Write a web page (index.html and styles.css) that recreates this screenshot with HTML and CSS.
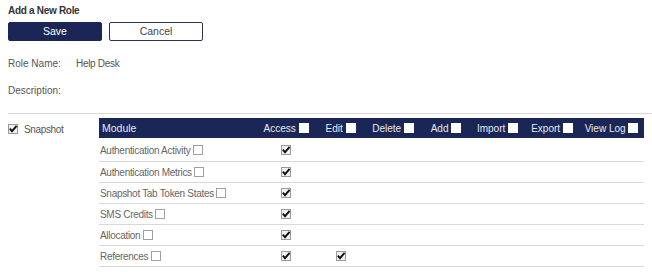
FILE: index.html
```html
<!DOCTYPE html>
<html>
<head>
<meta charset="utf-8">
<link rel="stylesheet" href="styles.css">
</head>
<body>
<h1 class="title">Add a New Role</h1>
<div class="actions">
  <button class="btn btn-primary">Save</button>
  <button class="btn btn-secondary">Cancel</button>
</div>
<div class="info">
  <div class="info-row"><span class="info-label">Role Name:</span><span class="info-value">Help Desk</span></div>
  <div class="info-row"><span class="info-label">Description:</span><span class="info-value"></span></div>
</div>
<hr class="divider">
<div class="section">
  <div class="section-side">
    <span class="cb cb-checked"><svg viewBox="0 0 10 10" width="10" height="10"><path d="M1.8 4.6 L4 7.2 L8.6 1.8" fill="none" stroke="#111" stroke-width="1.9"/></svg></span>
    <span class="section-name">Snapshot</span>
  </div>
  <table class="perm">
    <colgroup>
      <col class="c-module"><col class="c-access"><col class="c-edit"><col class="c-delete"><col class="c-add"><col class="c-import"><col class="c-export"><col class="c-log">
    </colgroup>
    <thead>
      <tr>
        <th class="th-module">Module</th>
        <th>Access <span class="cb cb-head"></span></th>
        <th>Edit <span class="cb cb-head"></span></th>
        <th>Delete <span class="cb cb-head"></span></th>
        <th>Add <span class="cb cb-head"></span></th>
        <th>Import <span class="cb cb-head"></span></th>
        <th>Export <span class="cb cb-head"></span></th>
        <th>View Log <span class="cb cb-head"></span></th>
      </tr>
    </thead>
    <tbody>
      <tr>
        <td class="td-module">Authentication Activity <span class="cb"></span></td>
        <td><span class="cb cb-checked"><svg viewBox="0 0 10 10" width="10" height="10"><path d="M1.8 4.6 L4 7.2 L8.6 1.8" fill="none" stroke="#111" stroke-width="1.9"/></svg></span></td>
        <td></td><td></td><td></td><td></td><td></td><td></td>
      </tr>
      <tr>
        <td class="td-module">Authentication Metrics <span class="cb"></span></td>
        <td><span class="cb cb-checked"><svg viewBox="0 0 10 10" width="10" height="10"><path d="M1.8 4.6 L4 7.2 L8.6 1.8" fill="none" stroke="#111" stroke-width="1.9"/></svg></span></td>
        <td></td><td></td><td></td><td></td><td></td><td></td>
      </tr>
      <tr>
        <td class="td-module">Snapshot Tab Token States <span class="cb"></span></td>
        <td><span class="cb cb-checked"><svg viewBox="0 0 10 10" width="10" height="10"><path d="M1.8 4.6 L4 7.2 L8.6 1.8" fill="none" stroke="#111" stroke-width="1.9"/></svg></span></td>
        <td></td><td></td><td></td><td></td><td></td><td></td>
      </tr>
      <tr>
        <td class="td-module">SMS Credits <span class="cb"></span></td>
        <td><span class="cb cb-checked"><svg viewBox="0 0 10 10" width="10" height="10"><path d="M1.8 4.6 L4 7.2 L8.6 1.8" fill="none" stroke="#111" stroke-width="1.9"/></svg></span></td>
        <td></td><td></td><td></td><td></td><td></td><td></td>
      </tr>
      <tr>
        <td class="td-module">Allocation <span class="cb"></span></td>
        <td><span class="cb cb-checked"><svg viewBox="0 0 10 10" width="10" height="10"><path d="M1.8 4.6 L4 7.2 L8.6 1.8" fill="none" stroke="#111" stroke-width="1.9"/></svg></span></td>
        <td></td><td></td><td></td><td></td><td></td><td></td>
      </tr>
      <tr>
        <td class="td-module">References <span class="cb"></span></td>
        <td><span class="cb cb-checked"><svg viewBox="0 0 10 10" width="10" height="10"><path d="M1.8 4.6 L4 7.2 L8.6 1.8" fill="none" stroke="#111" stroke-width="1.9"/></svg></span></td>
        <td><span class="cb cb-checked"><svg viewBox="0 0 10 10" width="10" height="10"><path d="M1.8 4.6 L4 7.2 L8.6 1.8" fill="none" stroke="#111" stroke-width="1.9"/></svg></span></td>
        <td></td><td></td><td></td><td></td><td></td>
      </tr>
    </tbody>
  </table>
</div>
</body>
</html>
```
FILE: styles.css
```css
html, body {
  margin: 0;
  padding: 0;
  background: #fff;
}
body {
  padding: 0 8px;
  font-family: "Liberation Sans", Arial, sans-serif;
  font-size: 10px;
  color: #555;
  overflow: hidden;
}
.title {
  margin: 0;
  padding-top: 4px;
  font-size: 10px;
  font-weight: bold;
  letter-spacing: -0.3px;
  color: #333;
  line-height: 13px;
}
.actions {
  display: flex;
  gap: 7px;
  margin-top: 5px;
}
.btn {
  width: 94px;
  height: 19px;
  font-family: "Liberation Sans", Arial, sans-serif;
  font-size: 10.5px;
  border-radius: 2px;
  padding: 0;
  line-height: 17px;
}
.btn-primary {
  background: #1a2756;
  border: 1px solid #1a2756;
  color: #fff;
}
.btn-secondary {
  background: #fff;
  border: 1px solid #2d3550;
  color: #444;
}
.info {
  display: flex;
  flex-direction: column;
  gap: 14px;
  margin-top: 16px;
}
.info-row {
  display: flex;
  height: 13px;
  line-height: 13px;
}
.info-label {
  width: 68px;
  color: #555;
}
.info-value {
  color: #555;
  letter-spacing: -0.3px;
}
.divider {
  border: 0;
  border-top: 1px solid #d9d9d9;
  margin: 16px -8px 0 0;
  height: 0;
}
.section {
  display: flex;
  margin-top: 4px;
}
.section-side {
  width: 92px;
  display: flex;
  align-items: center;
  align-self: flex-start;
  height: 22px;
  gap: 6px;
}
.section-name {
  color: #555;
  letter-spacing: -0.35px;
}
.cb {
  display: inline-block;
  width: 10px;
  height: 10px;
  box-sizing: border-box;
  border: 1px solid #a0a0a0;
  background: #fff;
  vertical-align: -1px;
  position: relative;
  letter-spacing: 0;
}
.cb svg {
  position: absolute;
  left: -1px;
  top: -1px;
}
.cb-checked {
  border-color: #9a9a9a;
  background: #f2f2f2;
}
.cb-head {
  border-color: #fff;
  background: #fff;
}
.perm {
  border-collapse: collapse;
  table-layout: fixed;
  width: 545px;
}
.c-module { width: 156px; }
.c-access { width: 62px; }
.c-edit { width: 47px; }
.c-delete { width: 58px; }
.c-add { width: 48px; }
.c-import { width: 55px; }
.c-export { width: 54px; }
.c-log { width: 65px; }
.perm thead th {
  background: #1a2756;
  color: #e8e8f0;
  font-weight: normal;
  height: 20px;
  padding: 0;
  text-align: center;
  white-space: nowrap;
  font-size: 10px;
}
.perm thead th.th-module {
  text-align: left;
  padding-left: 3px;
  font-size: 10.5px;
}
.perm tbody td {
  height: 20px;
  padding: 0;
  text-align: center;
  border-bottom: 1px solid #d9d9d9;
  white-space: nowrap;
}
.perm tbody tr:first-child td {
  height: 22px;
  padding-top: 1px;
}
.perm tbody td.td-module {
  text-align: left;
  padding-left: 1px;
  color: #666;
  font-size: 10px;
  letter-spacing: -0.3px;
}
```
